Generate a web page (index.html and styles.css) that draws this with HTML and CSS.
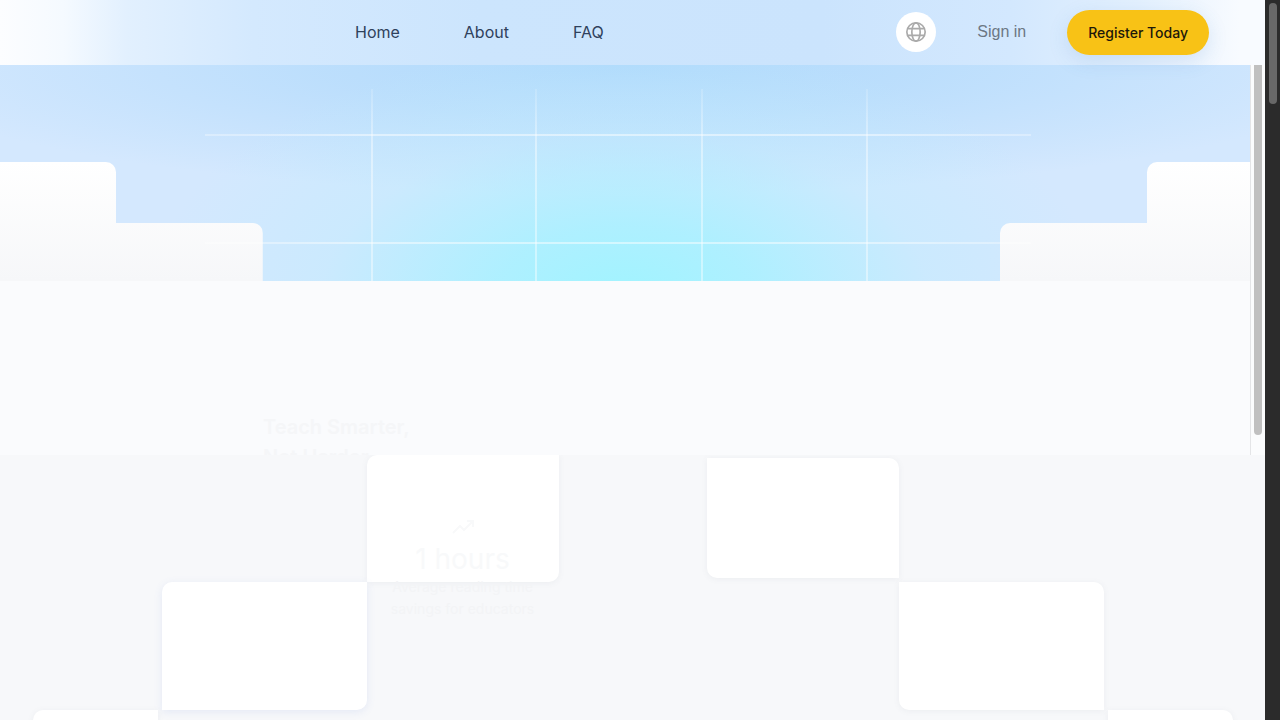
FILE: index.html
```html
<!DOCTYPE html>
<html lang="en">
<head>
<meta charset="utf-8">
<meta name="viewport" content="width=device-width, initial-scale=1">
<title>Teach Smarter</title>
<link rel="stylesheet" href="styles.css">
</head>
<body>
<div class="page">
  <header class="header">
    <nav class="nav">
      <a href="#home">Home</a>
      <a href="#about">About</a>
      <a href="#faq">FAQ</a>
    </nav>
    <div class="actions">
      <button class="language" type="button" aria-label="Language">
        <svg viewBox="0 0 24 24" width="20" height="20" fill="none" stroke="currentColor" stroke-width="2">
          <circle cx="12" cy="12" r="11"/>
          <ellipse cx="12" cy="12" rx="5" ry="11"/>
          <path d="M2 8h20M2 16h20"/>
        </svg>
      </button>
      <a class="signin" href="#signin">Sign in</a>
      <button class="register" type="button">Register Today</button>
    </div>
  </header>
  <div class="panel">
    <section class="intro">
      <div class="sky">
        <div class="stairs left"><span class="tall"></span><span class="low"></span></div>
        <div class="stairs right"><span class="low"></span><span class="tall"></span></div>
        <div class="lines">
          <i class="v v1"></i><i class="v v2"></i><i class="v v3"></i><i class="v v4"></i>
          <i class="h h1"></i><i class="h h2"></i>
        </div>
      </div>
      <h1 class="headline">Teach Smarter,<br>Not Harder.</h1>
    </section>
    <div class="track"><div class="thumb"></div></div>
  </div>
  <main class="cards">
    <div class="row row-one">
      <article class="card a stat">
        <svg viewBox="0 0 24 24" width="24" height="24" fill="none" stroke="currentColor" stroke-width="2"><path d="M2 18l7-7 4 4 9-9M16 6h6v6"/></svg>
        <strong>1 hours</strong>
        <p>Average reading time<br>savings for educators</p>
      </article>
      <article class="card b"></article>
    </div>
    <div class="row row-two">
      <article class="card a tinted"></article>
      <article class="card b"></article>
    </div>
    <div class="row row-three">
      <article class="card a"></article>
      <article class="card b"></article>
    </div>
  </main>
</div>
<div class="window-track"><div class="window-thumb"></div></div>
</body>
</html>
```
FILE: styles.css
```css
* { box-sizing: border-box; }
body {
  margin: 0;
  display: flex;
  height: 100vh;
  overflow: hidden;
  font-family: Inter, "Liberation Sans", sans-serif;
  background: #f7f8fa;
}
.page { flex: 1; min-width: 0; display: flex; flex-direction: column; }
.header {
  position: relative;
  z-index: 1;
  flex: none;
  height: 65px;
  padding: 0 56px 1px 0;
  display: flex;
  align-items: center;
  justify-content: space-between;
  background: linear-gradient(90deg, #fcfdff 0, #f5faff 5%, #e2f0fe 10%, #d4e9fe 20%, #cce5fd 38%, #cbe4fd 65%, #d3e8fe 80%, #e3f0fe 90%, #f8fbff 98%);
}
.nav { display: flex; gap: 64px; padding-left: 355px; }
a { text-decoration: none; }
.nav a { font-size: 16px; line-height: 24px; color: #2f415c; }
.actions { display: flex; align-items: center; }
button { border: 0; font: inherit; }
.language {
  width: 40px;
  height: 40px;
  padding: 0;
  border-radius: 50%;
  display: grid;
  place-items: center;
  background: #fff;
  color: #aaa;
}
.signin { margin: 0 41px; font-size: 16px; font-family: "Liberation Sans", Arial, sans-serif; color: #6c7784; }
.register {
  height: 45px;
  padding: 0 21px;
  border-radius: 24px;
  background: #f8c216;
  color: #1d180a;
  font-size: 14px;
  font-weight: 500;
  box-shadow: 0 6px 20px rgba(60, 120, 190, .15);
}
.panel { flex: none; height: 390px; display: flex; }
.intro { flex: 1; min-width: 0; overflow: hidden; background: #fafbfd; }
.sky {
  position: relative;
  height: 216px;
  display: flex;
  justify-content: space-between;
  align-items: flex-end;
  background:
    radial-gradient(ellipse 38% 120% at 50% 108%, #a0f4ff 0%, rgba(168, 241, 255, .85) 28%, rgba(190, 236, 254, .4) 64%, rgba(205, 232, 254, 0) 100%),
    radial-gradient(ellipse 60% 60% at 50% 0%, #b0dafc 0%, rgba(182, 220, 252, .8) 40%, rgba(212, 232, 254, 0) 100%),
    #d4e8fe;
}
.stairs { display: flex; align-items: flex-end; width: 21%; height: 119px; }
.left { padding-right: 0; }
.right { width: 20%; }
.stairs span { background: linear-gradient(#fff, #f6f7f9) bottom / 100% 119px; }
.tall { width: 116px; height: 119px; }
.low { flex: 1; height: 58px; }
.left span { border-top-right-radius: 10px; }
.right span { border-top-left-radius: 10px; }
.right .tall { width: 103px; }
.lines { position: absolute; inset: 0; }
.v, .h { position: absolute; }
.v { top: 24px; bottom: 0; width: 2px; background: linear-gradient(rgba(255, 255, 255, .15), rgba(255, 255, 255, .42) 30%); }
.v1 { left: 29.7%; }
.v2 { left: 42.8%; }
.v3 { left: 56.1%; }
.v4 { left: 69.25%; }
.h { left: 16.4%; right: 17.5%; height: 2px; background: linear-gradient(90deg, rgba(255, 255, 255, .3), rgba(255, 255, 255, .48) 20%, rgba(255, 255, 255, .48) 80%, rgba(255, 255, 255, .3)); }
.h1 { top: 69px; }
.h2 { top: 177px; }
.headline {
  margin: 131px 0 0 263px;
  font-size: 20px;
  line-height: 30px;
  font-weight: 600;
  color: #f5f6f8;
}
.track { width: 15px; padding-left: 3px; background: #fbfcfd; border-left: 1px solid #e4e5e7; }
.thumb { width: 8px; height: 370px; border-radius: 0 0 4px 4px; background: #c0c0c0; }
.cards { flex: 1; min-height: 0; overflow: hidden; background: #f7f8fa; }
.row { display: flex; justify-content: center; }
.row-one { gap: 148px; height: 127px; }
.row-two { gap: 532px; height: 128px; }
.row-three { gap: 950px; height: 128px; }
.card { width: 205px; background: #fff; box-shadow: 0 1px 6px rgba(100, 110, 130, .08); }
.row-one .card { width: 192px; }
.row-one .b { height: 120px; margin-top: 3px; }
.row-three .card { width: 125px; }
.a { border-radius: 10px 0; }
.b { border-radius: 0 10px; }
.tinted { box-shadow: 0 2px 8px rgba(90, 125, 210, .12); }
.stat {
  padding-top: 60px;
  display: flex;
  flex-direction: column;
  align-items: center;
  color: #f8f9fa;
}
.stat svg { flex: none; }
.stat strong { font-size: 28px; line-height: 40px; font-weight: 400; }
.stat p { margin: 0; margin-top: -3px; font-size: 14px; line-height: 22px; color: #f3f4f6; text-align: center; white-space: nowrap; }
.window-track { flex: none; width: 15px; padding: 3px 4px; background: #2b2b2b; }
.window-thumb { width: 8px; height: 101px; border-radius: 4px; background: #686868; }
```
